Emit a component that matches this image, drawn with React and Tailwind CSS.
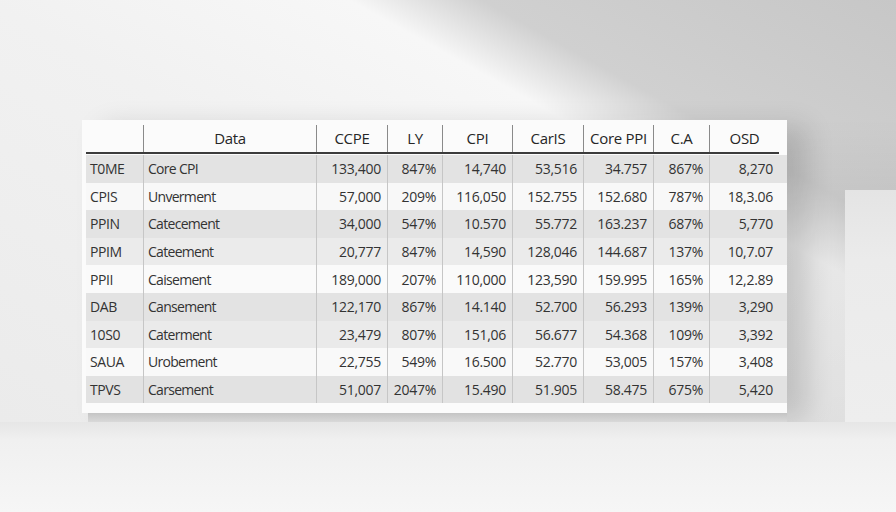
import React from 'react'

const cols = ['', 'Data', 'CCPE', 'LY', 'CPI', 'CarIS', 'Core PPI', 'C.A', 'OSD']

const rows = [
  { bg: 'bg-[#e3e3e3]', cells: ['T0ME', 'Core CPI', '133,400', '847%', '14,740', '53,516', '34.757', '867%', '8,270'] },
  { bg: 'bg-[#f8f8f8]', cells: ['CPIS', 'Unverment', '57,000', '209%', '116,050', '152.755', '152.680', '787%', '18,3.06'] },
  { bg: 'bg-[#e3e3e3]', cells: ['PPIN', 'Catecement', '34,000', '547%', '10.570', '55.772', '163.237', '687%', '5,770'] },
  { bg: 'bg-[#ebebeb]', cells: ['PPIM', 'Cateement', '20,777', '847%', '14,590', '128,046', '144.687', '137%', '10,7.07'] },
  { bg: 'bg-[#fafafa]', cells: ['PPII', 'Caisement', '189,000', '207%', '110,000', '123,590', '159.995', '165%', '12,2.89'] },
  { bg: 'bg-[#e3e3e3]', cells: ['DAB', 'Cansement', '122,170', '867%', '14.140', '52.700', '56.293', '139%', '3,290'] },
  { bg: 'bg-[#eaeaea]', cells: ['10S0', 'Caterment', '23,479', '807%', '151,06', '56.677', '54.368', '109%', '3,392'] },
  { bg: 'bg-[#f9f9f9]', cells: ['SAUA', 'Urobement', '22,755', '549%', '16.500', '52.770', '53,005', '157%', '3,408'] },
  { bg: 'bg-[#e2e2e2]', cells: ['TPVS', 'Carsement', '51,007', '2047%', '15.490', '51.905', '58.475', '675%', '5,420'] },
]

const grid = 'grid grid-cols-[57px_173px_71px_55px_70px_71px_70px_56px_70px]'

function cellClass(i) {
  if (i === 0) return 'justify-start pl-[4px] tracking-[-0.03em]'
  if (i === 1) return 'border-l border-[#c6c6c6] justify-start pl-[4px] tracking-[-0.05em]'
  return 'border-l border-[#c6c6c6] justify-end pr-[6px] tracking-[-0.02em]'
}

export default function App() {
  return (
    <div className="w-[896px] h-[512px] overflow-hidden flex flex-col font-['Open_Sans',sans-serif] text-[#333333]">
      {/* wall */}
      <div className="h-[422px] shrink-0 flex bg-[linear-gradient(29deg,#ebebeb_0%,#f1f1f1_45%,#f7f7f7_67%,#d0d0d0_75%,#c7c7c7_100%)]">
        <div className="pt-[120px] pl-[82px] flex flex-col">
          <div className="w-[705px] h-[293px] bg-[#fbfbfb] pt-[2px] pl-[4px] shadow-[20px_6px_26px_rgba(0,0,0,0.14)]">
            {/* header */}
            <div className={`${grid} h-[30px] text-[15px] text-[#262626] tracking-[-0.02em]`}>
              {cols.map((c, i) => (
                <div key={i} className={`flex items-center justify-center ${i > 0 ? 'border-l border-[#8a8a8a] mt-[3px]' : ''}`}>
                  {c}
                </div>
              ))}
            </div>
            <div className="w-[693px] h-[2px] bg-[#3c3c3c]" />
            <div className="h-[1px]" />
            {rows.map((r, ri) => (
              <div key={ri} className={`${grid} h-[27.6px] text-[14px] ${r.bg}`}>
                {r.cells.map((c, i) => (
                  <div key={i} className={`flex items-center ${cellClass(i)}`}>
                    {c}
                  </div>
                ))}
              </div>
            ))}
          </div>
          <div className="w-[699px] ml-[6px] h-[9px] bg-[linear-gradient(to_bottom,#c4c4c4,#d9d9d9)]" />
        </div>
        <div className="flex-1 flex flex-col pt-[190px] pl-[58px] bg-[linear-gradient(to_bottom,rgba(0,0,0,0)_0%,rgba(0,0,0,0)_28%,rgba(0,0,0,0.06)_50%,rgba(0,0,0,0.08)_100%)]">
          <div className="flex-1 bg-[linear-gradient(to_bottom,#e4e4e4,#ebebeb_30%,#eeeeee)]" />
        </div>
      </div>
      {/* floor */}
      <div className="flex-1 bg-[linear-gradient(to_bottom,#e6e6e6_0%,#f0f0f0_20%,#f6f6f6_100%)]" />
    </div>
  )
}
